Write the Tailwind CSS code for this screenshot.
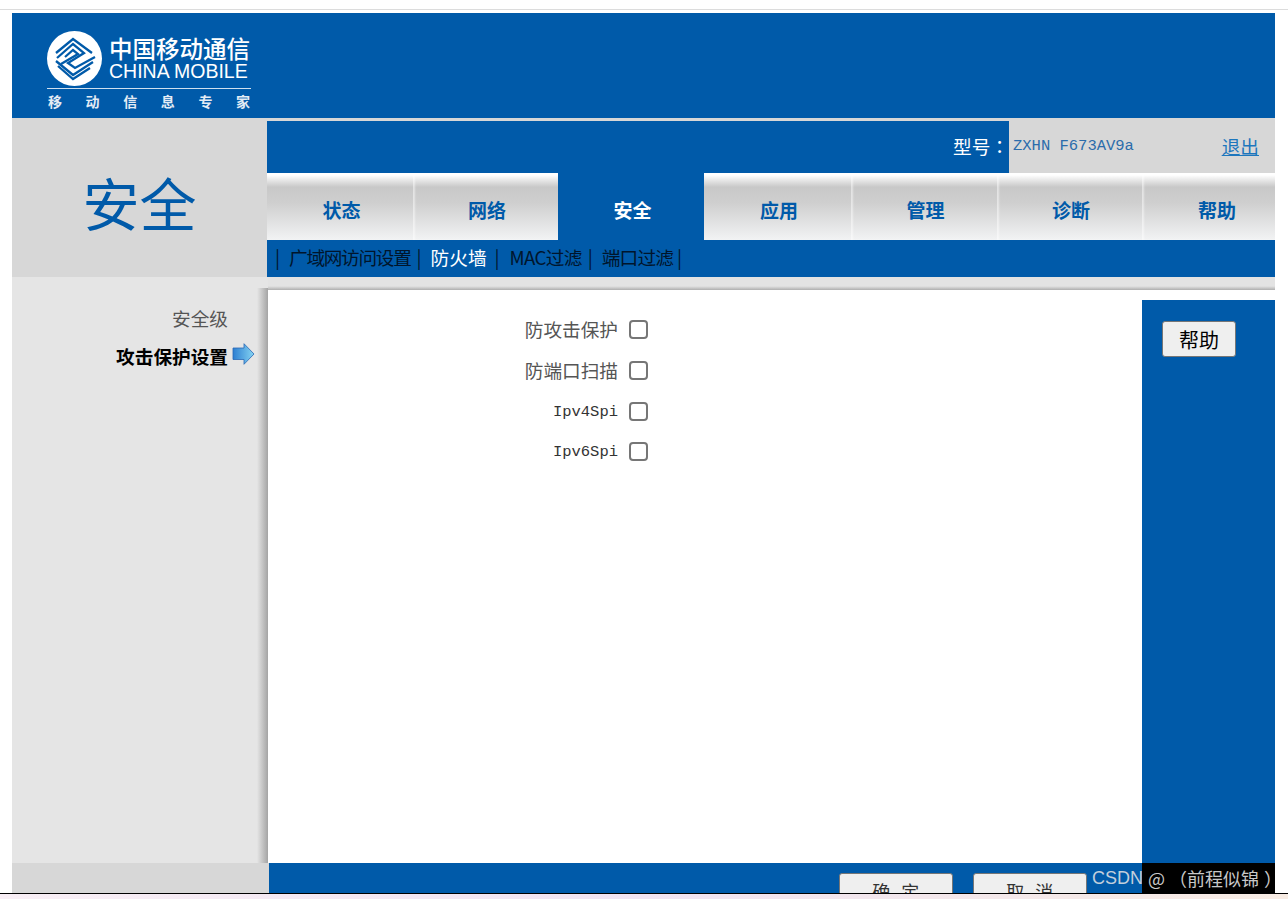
<!DOCTYPE html>
<html lang="zh">
<head>
    <meta charset="UTF-8">
    <title>安全</title>
    <script src="https://cdn.jsdelivr.net/npm/@tailwindcss/browser@4"></script>
</head>
<body class="bg-white h-[899px] overflow-hidden font-['Noto_Sans_CJK_SC','Noto_Sans',sans-serif]">
    <div class="relative h-[899px] flex flex-col">
        <div class="h-[13px] pt-[9px] shrink-0"><div class="h-px bg-[#dcdcdc]"></div></div>

        <div class="h-[880px] pl-3 pr-[13px] overflow-hidden shrink-0 flex flex-col">
            <!-- logo -->
            <header class="h-[105px] bg-[#005aa9] flex pl-[35px] pt-[17px] shrink-0">
                <div class="w-[204px] text-white">
                    <div class="flex items-center h-[56px]">
                        <svg class="w-[55px] h-[55px] shrink-0" viewBox="0 0 55 55">
                            <circle cx="27.5" cy="27.5" r="27.5" fill="#fff"/>
                            <g fill="none" stroke="#005aa9" stroke-width="2.3">
                                <path d="M9 22 L26 8 L45 22"/>
                                <path d="M10 27 L26 13 L37 22 L21 32 L28 37 L48 26"/>
                                <path d="M18 26 L26 19 L31 23 L14 33"/>
                                <path d="M9 30 L26 44 L46 31"/>
                                <path d="M11 35 L26 48 L43 37"/>
                            </g>
                        </svg>
                        <div class="ml-[7px] w-[142px] pt-[1px]">
                            <div class="text-[23.5px] leading-[24px] font-medium whitespace-nowrap">中国移动通信</div>
                            <div class="text-[19.5px] leading-[22px] font-['Liberation_Sans',sans-serif] whitespace-nowrap">CHINA MOBILE</div>
                        </div>
                    </div>
                    <div class="h-px bg-[#cfe0f0] mt-[2px]"></div>
                    <div class="flex justify-between px-px text-[14px] leading-[18px] font-bold text-[#e4ecf5] mt-[3px]">
                        <span>移</span><span>动</span><span>信</span><span>息</span><span>专</span><span>家</span>
                    </div>
                </div>
            </header>

            <div class="h-[3px] bg-[#d7d7d7] shrink-0"></div>

            <!-- top -->
            <div class="h-[156px] flex shrink-0">
                <div class="w-[255px] bg-[#d7d7d7] flex items-center justify-center pt-[4px] shrink-0">
                    <span class="text-[57px] leading-none text-[#005aa9]">安全</span>
                </div>
                <div class="flex-1 min-w-0 flex flex-col">
                    <div class="h-[52px] flex bg-[#005aa9] shrink-0">
                        <div class="flex-1 flex items-center justify-end text-white text-[18.67px] pb-[2px]">型号<span class="font-['Noto_Sans_CJK_TC',sans-serif]">：</span></div>
                        <div class="w-[266px] bg-[#d7d7d7] flex items-center pl-1 text-[#2b6cab]">
                            <span class="font-['Liberation_Mono',monospace] text-[15.5px]">ZXHN F673AV9a</span>
                            <a class="ml-auto mr-4 mb-[2px] text-[18.67px] leading-[24px] underline text-[#1c76bd]">退出</a>
                        </div>
                    </div>
                    <nav class="h-[67px] flex overflow-hidden shrink-0 text-[19px] font-bold text-[#005aa9]">
                        <div class="w-[146px] shrink-0 flex items-center justify-center pt-[8px] pl-[3px] bg-[linear-gradient(#fff,#fff_2px,#c8c8c8_14px,#cfcfcf_30px,#f2f3f4)]">状态</div>
                        <div class="w-[145px] shrink-0 flex items-center justify-center pt-[8px] pl-[3px] bg-[linear-gradient(#fff,#fff_2px,#c8c8c8_14px,#cfcfcf_30px,#f2f3f4)] shadow-[inset_2px_0_2px_#ffffff80]">网络</div>
                        <div class="w-[146px] shrink-0 flex items-center justify-center pt-[8px] pl-[3px] bg-[#005aa9] text-white">安全</div>
                        <div class="w-[147px] shrink-0 flex items-center justify-center pt-[8px] pl-[3px] bg-[linear-gradient(#fff,#fff_2px,#c8c8c8_14px,#cfcfcf_30px,#f2f3f4)]">应用</div>
                        <div class="w-[146px] shrink-0 flex items-center justify-center pt-[8px] pl-[3px] bg-[linear-gradient(#fff,#fff_2px,#c8c8c8_14px,#cfcfcf_30px,#f2f3f4)] shadow-[inset_2px_0_2px_#ffffff80]">管理</div>
                        <div class="w-[145px] shrink-0 flex items-center justify-center pt-[8px] pl-[3px] bg-[linear-gradient(#fff,#fff_2px,#c8c8c8_14px,#cfcfcf_30px,#f2f3f4)] shadow-[inset_2px_0_2px_#ffffff80]">诊断</div>
                        <div class="w-[147px] shrink-0 flex items-center justify-center pt-[8px] pl-[3px] bg-[linear-gradient(#fff,#fff_2px,#c8c8c8_14px,#cfcfcf_30px,#f2f3f4)] shadow-[inset_2px_0_2px_#ffffff80]">帮助</div>
                    </nav>
                    <div class="h-[37px] bg-[#005aa9] flex items-center pl-2 pb-[3px] text-[18.67px] text-[#00152c] whitespace-nowrap">
                        <span>|</span><span class="ml-[9px] tracking-[-1.3px]">广域网访问设置</span><span class="ml-[6px]">|</span>
                        <span class="ml-[9px] text-white">防火墙</span><span class="ml-2">|</span>
                        <span class="ml-[10px] tracking-[-0.7px]">MAC过滤</span><span class="ml-[6px]">|</span>
                        <span class="ml-[9px] tracking-[-0.8px]">端口过滤</span><span class="ml-1">|</span>
                    </div>
                </div>
            </div>

            <!-- main -->
            <div class="h-[586px] flex shrink-0">
                <aside class="w-[256px] flex flex-col shrink-0">
                    <div class="h-[11px] bg-[#e5e5e5] shrink-0"></div>
                    <div class="flex-1 bg-[linear-gradient(90deg,#e5e5e5_245px,#a4a4a4_256px)] pt-[16px] pr-[40px] text-right">
                        <div class="text-[18.67px] leading-[28px] text-[#555]">安全级</div>
                        <div class="relative mt-[10px] text-[18.67px] leading-[28px] font-bold text-black">
                            攻击保护设置
                            <svg class="absolute left-[220px] top-[1px] w-[23px] h-[22px]" viewBox="0 0 23 22">
                                <defs>
                                    <linearGradient id="arrow-fill" x1="0" x2="1" y1="0" y2="0">
                                        <stop offset="0" stop-color="#2d7fd2"/>
                                        <stop offset="1" stop-color="#86d4f2"/>
                                    </linearGradient>
                                </defs>
                                <path d="M1 5 H12 V0.7 L22 11 L12 21.3 V16.5 H1 Z" fill="url(#arrow-fill)" stroke="#2a68b5" stroke-width="0.8"/>
                            </svg>
                        </div>
                    </div>
                </aside>
                <div class="flex-1 min-w-0 flex flex-col">
                    <div class="h-[13px] shrink-0 bg-[linear-gradient(#e3e3e3_70%,#aeaeae)]"></div>
                    <div class="flex-1 flex min-h-0 bg-white">
                        <section class="flex-1 pt-[19px]">
                            <div class="flex items-center h-[41px]"><span class="w-[350px] pb-[2px] text-right text-[18.67px] text-[#555]">防攻击保护</span><span class="ml-[11px] w-[19px] h-[19px] rounded-[4px] border-2 border-[#767676] bg-white"></span></div>
                            <div class="flex items-center h-[41px]"><span class="w-[350px] pb-[2px] text-right text-[18.67px] text-[#555]">防端口扫描</span><span class="ml-[11px] w-[19px] h-[19px] rounded-[4px] border-2 border-[#767676] bg-white"></span></div>
                            <div class="flex items-center h-[40px]"><span class="w-[350px] pt-[3px] text-right text-[15.5px] text-[#333] font-['Liberation_Mono',monospace]">Ipv4Spi</span><span class="ml-[11px] w-[19px] h-[19px] rounded-[4px] border-2 border-[#767676] bg-white"></span></div>
                            <div class="flex items-center h-[41px]"><span class="w-[350px] pt-[3px] text-right text-[15.5px] text-[#333] font-['Liberation_Mono',monospace]">Ipv6Spi</span><span class="ml-[11px] w-[19px] h-[19px] rounded-[4px] border-2 border-[#767676] bg-white"></span></div>
                        </section>
                        <div class="w-[133px] mt-[10px] bg-[#005aa9] pl-5 pt-[21px] shrink-0">
                            <button class="w-[74px] h-[36px] pt-[2px] bg-[#efefef] border border-[#767676] rounded-[3px] text-[20px] leading-none text-black">帮助</button>
                        </div>
                    </div>
                </div>
            </div>

            <!-- footer -->
            <div class="h-[30px] flex shrink-0">
                <div class="w-[257px] bg-[#d7d7d7] shrink-0"></div>
                <div class="flex-1 bg-[#005aa9] overflow-hidden flex pl-[570px] pt-[10px] gap-5">
                    <button class="w-[114px] h-[36px] pl-[3px] bg-[#efefef] border border-[#767676] rounded-[3px] text-[18px] leading-[34px] text-[#333] tracking-[3.5px] shrink-0">确 定</button>
                    <button class="w-[114px] h-[36px] pl-[3px] bg-[#efefef] border border-[#767676] rounded-[3px] text-[18px] leading-[34px] text-[#333] tracking-[3.5px] shrink-0">取 消</button>
                </div>
            </div>
        </div>

        <div class="h-px bg-black shrink-0"></div>
        <div class="flex-1 bg-[linear-gradient(90deg,#f8eef5,#efe3f2_50%,#f8ece4)]"></div>

        <!-- watermark -->
        <div class="absolute left-[1092px] top-[863px] h-[30px] flex items-center text-[18px] whitespace-nowrap">
            <span class="w-[50px] pt-[1px] text-[#c3cfdc] font-['Liberation_Sans',sans-serif]">CSDN</span>
            <span class="w-[133px] h-[30px] bg-black text-[#c8c8c8] leading-[30px] pl-[6px] font-['Noto_Sans_CJK_TC',sans-serif]">@ （前程似锦<span class="pl-[5px]">）</span></span>
        </div>
    </div>
</body>
</html>
